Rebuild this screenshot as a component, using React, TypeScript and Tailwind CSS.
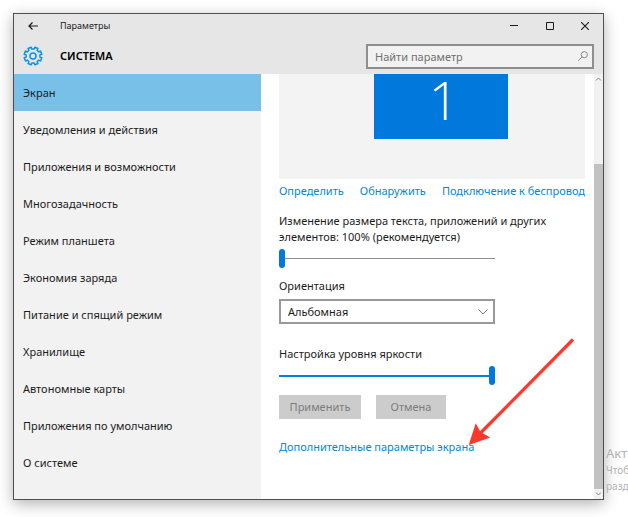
import { useState } from 'react'

const sections = [
  'Экран',
  'Уведомления и действия',
  'Приложения и возможности',
  'Многозадачность',
  'Режим планшета',
  'Экономия заряда',
  'Питание и спящий режим',
  'Хранилище',
  'Автономные карты',
  'Приложения по умолчанию',
  'О системе',
]

function GearIcon() {
  return (
    <svg viewBox="0 0 20 20" className="size-5 text-[#0a93e2]" fill="none" stroke="currentColor" strokeWidth="1.5" strokeLinejoin="round" aria-hidden="true">
      <path
        transform="rotate(22.5 10 10)"
        d="M8.28 1.17 11.72 1.17 11.57 3.18 13.71 4.06 15.03 2.54 17.46 4.97 15.94 6.29 16.82 8.43 18.83 8.28 18.83 11.72 16.82 11.57 15.94 13.71 17.46 15.03 15.03 17.46 13.71 15.94 11.57 16.82 11.72 18.83 8.28 18.83 8.43 16.82 6.29 15.94 4.97 17.46 2.54 15.03 4.06 13.71 3.18 11.57 1.17 11.72 1.17 8.28 3.18 8.43 4.06 6.29 2.54 4.97 4.97 2.54 6.29 4.06 8.43 3.18Z"
      />
      <circle cx="10" cy="10" r="3" />
    </svg>
  )
}

function TitleBar() {
  return (
    <div className="flex h-6 items-center text-[#1a1a1a]">
      <button type="button" aria-label="Назад" className="flex w-[37px] justify-center">
        <svg viewBox="0 0 10 8" className="h-2 w-2.5" fill="none" stroke="currentColor" strokeWidth="1.2">
          <path d="M10 4H1M4.5.5 1 4l3.5 3.5" />
        </svg>
      </button>
      <span className="ml-[9px] flex-1 text-[9px]">Параметры</span>
      <button type="button" aria-label="Свернуть" className="flex w-9 justify-center">
        <svg viewBox="0 0 8 8" className="size-2" stroke="currentColor">
          <path d="M0 3.5h8" />
        </svg>
      </button>
      <button type="button" aria-label="Развернуть" className="flex w-[35px] justify-center">
        <svg viewBox="0 0 8 8" className="size-2" fill="none" stroke="currentColor">
          <path d="M.5.5h7v7h-7z" />
        </svg>
      </button>
      <button type="button" aria-label="Закрыть" className="flex w-9 justify-center">
        <svg viewBox="0 0 8 8" className="size-2" stroke="currentColor" strokeWidth="1.1">
          <path d="m0 0 8 8M8 0 0 8" />
        </svg>
      </button>
    </div>
  )
}

function Header() {
  return (
    <div className="flex h-9 items-center px-[9px]">
      <GearIcon />
      <h1 className="ml-[17px] flex-1 text-[11px] font-semibold text-black">СИСТЕМА</h1>
      <div className="relative w-[228px]">
        <input
          type="search"
          aria-label="Найти параметр"
          placeholder="Найти параметр"
          className="block h-[25px] w-full appearance-none border-2 border-[#8e8e8e] bg-[#f2f2f2] pl-[7px] pr-6 text-[11px] text-black outline-none placeholder:text-[#707070]"
        />
        <svg viewBox="0 0 10 10" className="absolute right-[6px] top-[7px] size-2.5 text-[#858585]" fill="none" stroke="currentColor">
          <circle cx="6.3" cy="3.7" r="3.1" />
          <path d="M4 6 .3 9.7" />
        </svg>
      </div>
    </div>
  )
}

function Sidebar() {
  const [active, setActive] = useState('Экран')

  return (
    <nav className="w-[247px] shrink-0 bg-[#f2f2f2] pb-[18px]">
      {sections.map((name) => (
        <button
          key={name}
          type="button"
          onClick={() => setActive(name)}
          className={
            name === active
              ? 'block h-[37px] w-full bg-[#78c0e8] pl-[9px] pt-px text-left'
              : 'block h-[37px] w-full pl-[9px] pt-px text-left'
          }
        >
          {name}
        </button>
      ))}
    </nav>
  )
}

function DisplayPanel() {
  const [scale, setScale] = useState(0)
  const [brightness, setBrightness] = useState(100)

  return (
    <main className="relative min-w-0 flex-1 pl-[18px] pr-[9px]">
      <div className="flex h-[105px] bg-[#f3f3f3] pl-[95px]">
        <div className="flex h-[65px] w-[134px] justify-center bg-[#0078dc] pl-1.5 font-['Open_Sans'] text-[54px] font-light leading-[50px] text-white">
          1
        </div>
      </div>

      <div className="mt-1 flex gap-4 overflow-hidden whitespace-nowrap text-[#0088d8]">
        <a href="#identify">Определить</a>
        <a href="#detect">Обнаружить</a>
        <a href="#wireless">Подключение к беспровод</a>
      </div>

      <label htmlFor="scale" className="mt-[14px] block w-[270px]">
        Изменение размера текста, приложений и других элементов: 100% (рекомендуется)
      </label>
      <input
        id="scale"
        type="range"
        value={scale}
        onChange={(e) => setScale(Number(e.target.value))}
        className="mt-1 block h-[19px] w-[216px] appearance-none bg-linear-to-r from-[#8f8f8f] to-[#8f8f8f] bg-[length:100%_1px] bg-center bg-no-repeat [&::-webkit-slider-thumb]:h-[19px] [&::-webkit-slider-thumb]:w-[6px] [&::-webkit-slider-thumb]:appearance-none [&::-webkit-slider-thumb]:rounded-full [&::-webkit-slider-thumb]:bg-[#0078dc]"
      />

      <label htmlFor="orientation" className="mt-[10px] block">Ориентация</label>
      <div className="relative mt-[5px] w-[216px]">
        <select
          id="orientation"
          className="block h-[25px] w-full appearance-none border-2 border-[#999999] bg-white pl-[7px]"
        >
          <option>Альбомная</option>
          <option>Книжная</option>
        </select>
        <svg viewBox="0 0 10 6" className="pointer-events-none absolute right-[7px] top-[10px] h-1.5 w-2.5 text-[#777777]" fill="none" stroke="currentColor">
          <path d="M.5.5 5 5 9.5.5" />
        </svg>
      </div>

      <label htmlFor="brightness" className="mt-[22px] block">Настройка уровня яркости</label>
      <input
        id="brightness"
        type="range"
        value={brightness}
        onChange={(e) => setBrightness(Number(e.target.value))}
        className="mt-1 block h-[19px] w-[216px] appearance-none bg-linear-to-r from-[#0082d8] to-[#0082d8] bg-[length:100%_2px] bg-center bg-no-repeat [&::-webkit-slider-thumb]:h-[19px] [&::-webkit-slider-thumb]:w-[6px] [&::-webkit-slider-thumb]:appearance-none [&::-webkit-slider-thumb]:rounded-full [&::-webkit-slider-thumb]:bg-[#0078dc]"
      />

      <div className="mt-[10px] flex gap-[15px] text-[#7d7d7d]">
        <button type="button" disabled className="h-6 w-[82px] bg-[#cccccc]">Применить</button>
        <button type="button" disabled className="h-6 w-[70px] bg-[#cccccc]">Отмена</button>
      </div>

      <a href="#advanced" className="mt-5 block w-fit text-[#0088d8]">Дополнительные параметры экрана</a>

      {/* Pointer to the advanced settings link */}
      <svg viewBox="0 0 108 108" className="pointer-events-none absolute left-[207px] top-[264px] size-[108px] text-[#fb382c]">
        <path d="M105 1.5 12 95.5" stroke="currentColor" strokeWidth="3.2" />
        <path d="M.7 107 7.7 85.3 12.5 94 22.3 99.5Z" fill="currentColor" />
      </svg>
    </main>
  )
}

function ScrollBar() {
  return (
    <div className="flex w-[9px] shrink-0 flex-col bg-[#f1f1f1] text-[#8a8a8a]" aria-hidden="true">
      <svg viewBox="0 0 9 10" className="h-2.5" fill="none" stroke="currentColor">
        <path d="M2 6.5 4.5 4 7 6.5" />
      </svg>
      <div className="mt-20 flex-1 bg-[#c2c2c2]" />
      <svg viewBox="0 0 9 10" className="h-2.5" fill="none" stroke="currentColor">
        <path d="M2 3.5 4.5 6 7 3.5" />
      </svg>
    </div>
  )
}

export default function App() {
  return (
    <div className="relative min-h-screen overflow-hidden bg-white py-[13px] pl-[13px] pr-6 font-['Noto_Sans',sans-serif] text-[11px] leading-4 text-[#1c1c1c]">
      <div className="border border-[#4f4f4f] bg-white shadow-[0_4px_14px_rgba(0,0,0,0.3)]">
        <header className="bg-[#e6e6e6]">
          <TitleBar />
          <Header />
        </header>
        <div className="flex">
          <Sidebar />
          <DisplayPanel />
          <ScrollBar />
        </div>
      </div>

      {/* Activation watermark of the desktop beside the window */}
      <div className="absolute right-0 top-[444px] w-[22px] whitespace-nowrap text-[#b3b3b3]">
        <p className="text-[13px] leading-[18px]">Акт</p>
        <p className="text-[10px]">Чтоб</p>
        <p className="text-[10px]">разд</p>
      </div>
    </div>
  )
}
